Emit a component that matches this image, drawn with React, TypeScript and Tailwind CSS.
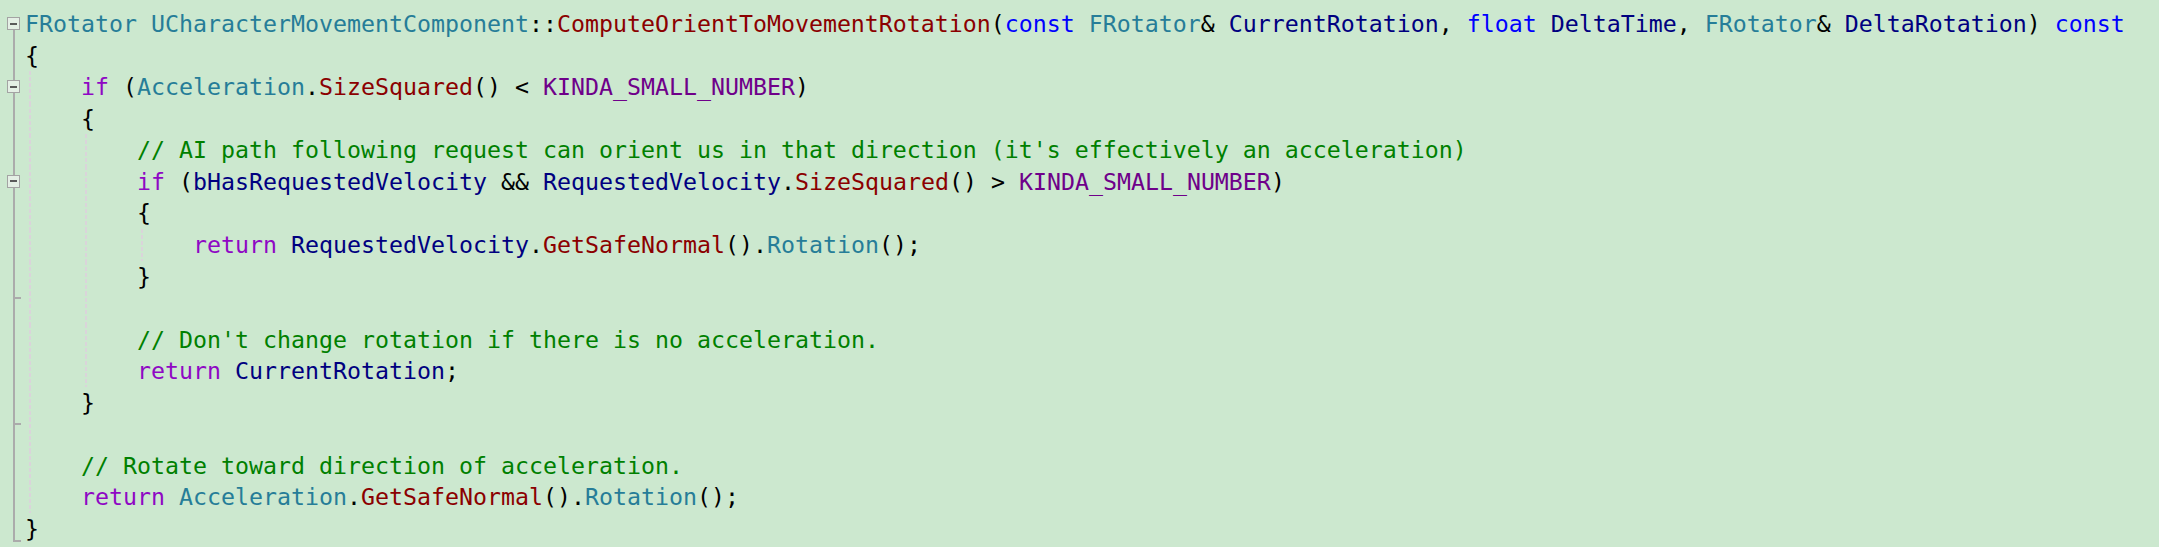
const T = "text-[#267d98]";
const F = "text-[#8b0000]";
const K = "text-[#0000ff]";
const P = "text-[#000080]";
const C = "text-[#8f08c4]";
const M = "text-[#6f008a]";
const G = "text-[#008000]";
const B = "text-[#000000]";

type Tok = [string, string];
type Gutter = "boxTop" | "box" | "line" | "tickTop" | "end";

type Line = { indent: number; gutter: Gutter; toks: Tok[] };

const lines: Line[] = [
  {
    indent: 0,
    gutter: "boxTop",
    toks: [
      [T, "FRotator"], [B, " "], [T, "UCharacterMovementComponent"], [B, "::"],
      [F, "ComputeOrientToMovementRotation"], [B, "("], [K, "const"], [B, " "],
      [T, "FRotator"], [B, "& "], [P, "CurrentRotation"], [B, ", "], [K, "float"],
      [B, " "], [P, "DeltaTime"], [B, ", "], [T, "FRotator"], [B, "& "],
      [P, "DeltaRotation"], [B, ") "], [K, "const"],
    ],
  },
  { indent: 0, gutter: "line", toks: [[B, "{"]] },
  {
    indent: 1,
    gutter: "box",
    toks: [
      [C, "if"], [B, " ("], [T, "Acceleration"], [B, "."], [F, "SizeSquared"],
      [B, "() < "], [M, "KINDA_SMALL_NUMBER"], [B, ")"],
    ],
  },
  { indent: 1, gutter: "line", toks: [[B, "{"]] },
  {
    indent: 2,
    gutter: "line",
    toks: [[G, "// AI path following request can orient us in that direction (it's effectively an acceleration)"]],
  },
  {
    indent: 2,
    gutter: "box",
    toks: [
      [C, "if"], [B, " ("], [P, "bHasRequestedVelocity"], [B, " && "],
      [P, "RequestedVelocity"], [B, "."], [F, "SizeSquared"], [B, "() > "],
      [M, "KINDA_SMALL_NUMBER"], [B, ")"],
    ],
  },
  { indent: 2, gutter: "line", toks: [[B, "{"]] },
  {
    indent: 3,
    gutter: "line",
    toks: [
      [C, "return"], [B, " "], [P, "RequestedVelocity"], [B, "."], [F, "GetSafeNormal"],
      [B, "()."], [T, "Rotation"], [B, "();"],
    ],
  },
  { indent: 2, gutter: "line", toks: [[B, "}"]] },
  { indent: 2, gutter: "tickTop", toks: [] },
  { indent: 2, gutter: "line", toks: [[G, "// Don't change rotation if there is no acceleration."]] },
  { indent: 2, gutter: "line", toks: [[C, "return"], [B, " "], [P, "CurrentRotation"], [B, ";"]] },
  { indent: 1, gutter: "line", toks: [[B, "}"]] },
  { indent: 1, gutter: "tickTop", toks: [] },
  { indent: 1, gutter: "line", toks: [[G, "// Rotate toward direction of acceleration."]] },
  {
    indent: 1,
    gutter: "line",
    toks: [
      [C, "return"], [B, " "], [T, "Acceleration"], [B, "."], [F, "GetSafeNormal"],
      [B, "()."], [T, "Rotation"], [B, "();"],
    ],
  },
  { indent: 0, gutter: "end", toks: [[B, "}"]] },
];

// outlining margin: vertical rule with collapse boxes and end ticks
function FoldBox() {
  return (
    <div className="w-[13px] h-[13px] shrink-0 border border-[#a3a3a3] bg-[#e4efe5] flex items-center justify-center">
      <div className="w-[7px] h-[2px] bg-[#5a5a5a]" />
    </div>
  );
}

function FoldGutter({ kind }: { kind: Gutter }) {
  const rule = "ml-[6px] w-[8px] border-l-2 border-[#ababab]";
  return (
    <div className="w-[25px] shrink-0 self-stretch pl-[7px] flex flex-col">
      {kind === "boxTop" && (
        <>
          <div className="h-[9px]" />
          <FoldBox />
          <div className={`flex-1 ${rule}`} />
        </>
      )}
      {kind === "box" && (
        <>
          <div className={`h-[9px] ${rule}`} />
          <FoldBox />
          <div className={`flex-1 ${rule}`} />
        </>
      )}
      {kind === "line" && <div className={`flex-1 ${rule}`} />}
      {kind === "tickTop" && (
        <div className={`flex-1 ${rule} pt-[5px]`}>
          <div className="h-[2px] bg-[#ababab]" />
        </div>
      )}
      {kind === "end" && (
        <div className={`flex-1 ${rule} mb-[3px] flex flex-col justify-end`}>
          <div className="h-[2px] bg-[#ababab]" />
        </div>
      )}
    </div>
  );
}

export default function App() {
  return (
    <div className="w-[2159px] h-[547px] bg-[#cce8cf] pt-[8px] overflow-hidden font-['DejaVu_Sans_Mono',monospace] text-[23.25px]">
      {lines.map((line, i) => (
        <div key={i} className="flex h-[31.57px] leading-[31.57px]">
          <FoldGutter kind={line.gutter} />
          {Array.from({ length: line.indent }).map((_, j) => (
            <div key={j} className="w-[56px] shrink-0 self-stretch pl-[4px]">
              <div className="w-[2px] h-full bg-[repeating-linear-gradient(to_bottom,#dad4da_0px,#dad4da_4px,transparent_4px,transparent_6px)]" />
            </div>
          ))}
          <div className="whitespace-pre">
            {line.toks.map(([cls, text], k) => (
              <span key={k} className={cls}>
                {text}
              </span>
            ))}
          </div>
        </div>
      ))}
    </div>
  );
}
